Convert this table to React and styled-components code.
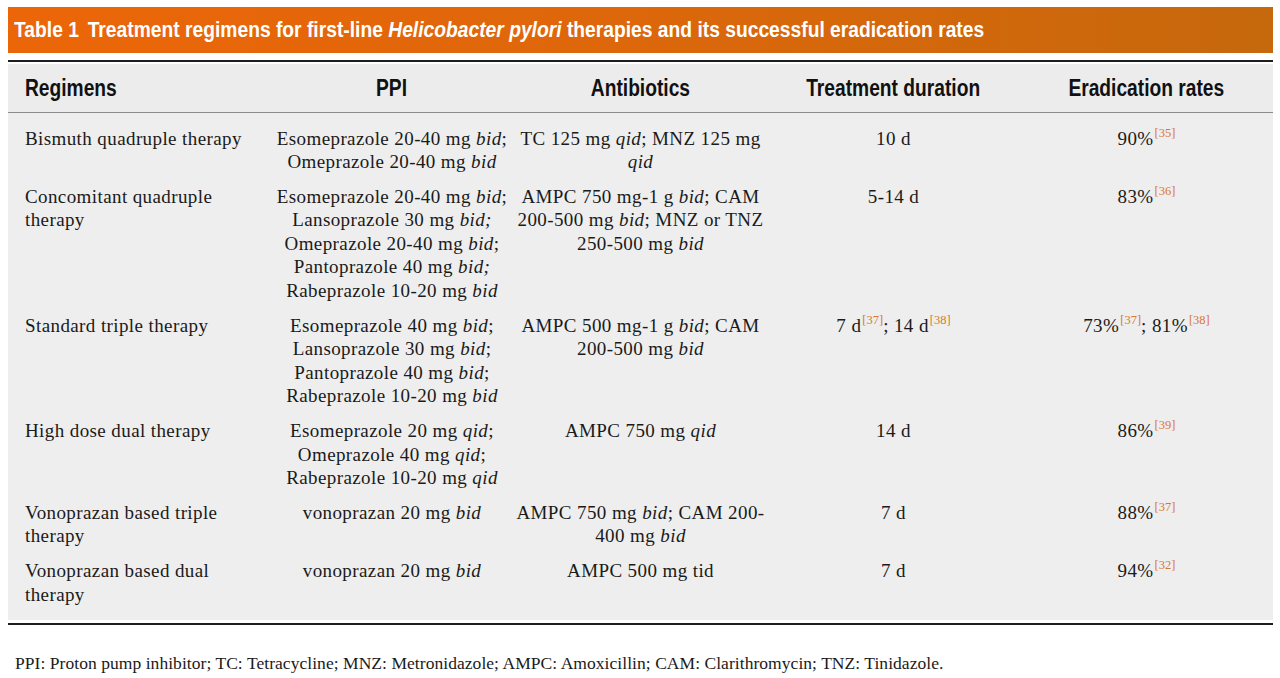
import React from "react";
import styled, { createGlobalStyle } from "styled-components";

const Global = createGlobalStyle`
  html, body { margin: 0; padding: 0; background: #ffffff; }
  body { width: 1280px; height: 678px; overflow: hidden; }
`;

const COLS = "262px 244px 253px 253px 253px";

const Page = styled.div`
  width: 1265px;
  padding: 7px 0 0 8px;
`;

const TitleBar = styled.div`
  height: 46px;
  display: flex;
  align-items: center;
  padding-left: 6px;
  background: linear-gradient(90deg, #ec6608 0%, #dd670b 50%, #c6680c 100%);
  color: #ffffff;
  font-family: "Liberation Sans Narrow", "Arial Narrow", "Liberation Sans", sans-serif;
  font-weight: 700;
  font-size: 22px;
  white-space: nowrap;
  overflow: hidden;
`;

/* Arial Narrow is not installed: narrow the Liberation Sans glyphs instead */
const Narrow = styled.span`
  display: inline-block;
  white-space: nowrap;
  transform: scaleX(${(p) => p.$k});
  transform-origin: ${(p) => p.$origin || "left"} center;
`;

const Gap = styled.span`
  display: inline-block;
  width: 10px;
`;

const Table = styled.div`
  margin-top: 7px;
  border-top: 2px solid #1e1e1e;
  padding-top: 2px;
`;

const HeaderRow = styled.div`
  display: grid;
  grid-template-columns: ${COLS};
  height: 48px;
  align-items: center;
  background: #ececec;
  border-bottom: 1px solid #8c8c8c;
  font-family: "Liberation Sans Narrow", "Arial Narrow", "Liberation Sans", sans-serif;
  font-weight: 700;
  font-size: 23px;
  color: #111111;
`;

const HeadCell = styled.div`
  text-align: ${(p) => (p.$left ? "left" : "center")};
  padding-left: ${(p) => (p.$left ? "17px" : "0")};
`;

const Body = styled.div`
  background: #eeeeee;
  padding: 8px 0;
`;

const Row = styled.div`
  display: grid;
  grid-template-columns: ${COLS};
  padding: 5.5px 0;
  font-family: "Liberation Serif", "Times New Roman", serif;
  font-size: 19px;
  line-height: 23.6px;
  color: #1a1a1a;
  letter-spacing: 0.4px;
`;

const Cell = styled.div`
  text-align: ${(p) => (p.$left ? "left" : "center")};
  padding-left: ${(p) => (p.$left ? "17px" : "0")};
  white-space: nowrap;
`;

const Line = styled.div``;

const Ref = styled.sup`
  color: #d9782d;
  font-size: 12.5px;
  letter-spacing: 0;
  line-height: 0;
  vertical-align: 8px;
  margin-left: 1px;
`;

const BottomRule = styled.div`
  margin-top: 3px;
  border-top: 2px solid #1e1e1e;
`;

const Footnote = styled.p`
  margin: 26px 0 0 7px;
  font-family: "Liberation Serif", "Times New Roman", serif;
  font-size: 17.5px;
  line-height: 24px;
  color: #1a1a1a;
  letter-spacing: 0.05px;
`;

const I = ({ children }) => <i>{children}</i>;

const rows = [
  {
    reg: ["Bismuth quadruple therapy"],
    ppi: [
      <>Esomeprazole 20-40 mg <I>bid</I>;</>,
      <>Omeprazole 20-40 mg <I>bid</I></>,
    ],
    abx: [
      <>TC 125 mg <I>qid</I>; MNZ 125 mg</>,
      <><I>qid</I></>,
    ],
    dur: [<>10 d</>],
    rate: [<>90%<Ref>[35]</Ref></>],
  },
  {
    reg: ["Concomitant quadruple", "therapy"],
    ppi: [
      <>Esomeprazole 20-40 mg <I>bid</I>;</>,
      <>Lansoprazole 30 mg <I>bid;</I></>,
      <>Omeprazole 20-40 mg <I>bid</I>;</>,
      <>Pantoprazole 40 mg <I>bid;</I></>,
      <>Rabeprazole 10-20 mg <I>bid</I></>,
    ],
    abx: [
      <>AMPC 750 mg-1 g <I>bid</I>; CAM</>,
      <>200-500 mg <I>bid</I>; MNZ or TNZ</>,
      <>250-500 mg <I>bid</I></>,
    ],
    dur: [<>5-14 d</>],
    rate: [<>83%<Ref>[36]</Ref></>],
  },
  {
    reg: ["Standard triple therapy"],
    ppi: [
      <>Esomeprazole 40 mg <I>bid</I>;</>,
      <>Lansoprazole 30 mg <I>bid</I>;</>,
      <>Pantoprazole 40 mg <I>bid</I>;</>,
      <>Rabeprazole 10-20 mg <I>bid</I></>,
    ],
    abx: [
      <>AMPC 500 mg-1 g <I>bid</I>; CAM</>,
      <>200-500 mg <I>bid</I></>,
    ],
    dur: [<>7 d<Ref>[37]</Ref>; 14 d<Ref>[38]</Ref></>],
    rate: [<>73%<Ref>[37]</Ref>; 81%<Ref>[38]</Ref></>],
  },
  {
    reg: ["High dose dual therapy"],
    ppi: [
      <>Esomeprazole 20 mg <I>qid</I>;</>,
      <>Omeprazole 40 mg <I>qid</I>;</>,
      <>Rabeprazole 10-20 mg <I>qid</I></>,
    ],
    abx: [<>AMPC 750 mg <I>qid</I></>],
    dur: [<>14 d</>],
    rate: [<>86%<Ref>[39]</Ref></>],
  },
  {
    reg: ["Vonoprazan based triple", "therapy"],
    ppi: [<>vonoprazan 20 mg <I>bid</I></>],
    abx: [
      <>AMPC 750 mg <I>bid</I>; CAM 200-</>,
      <>400 mg <I>bid</I></>,
    ],
    dur: [<>7 d</>],
    rate: [<>88%<Ref>[37]</Ref></>],
  },
  {
    reg: ["Vonoprazan based dual", "therapy"],
    ppi: [<>vonoprazan 20 mg <I>bid</I></>],
    abx: [<>AMPC 500 mg tid</>],
    dur: [<>7 d</>],
    rate: [<>94%<Ref>[32]</Ref></>],
  },
];

const heads = ["PPI", "Antibiotics", "Treatment duration", "Eradication rates"];

const Lines = ({ items }) => items.map((x, i) => <Line key={i}>{x}</Line>);

export default function App() {
  return (
    <>
      <Global />
      <Page>
        <TitleBar>
          <Narrow $k={0.875}>
            Table 1<Gap />Treatment regimens for first-line <i>Helicobacter pylori</i> therapies and its successful eradication rates
          </Narrow>
        </TitleBar>
        <Table>
          <HeaderRow>
            <HeadCell $left>
              <Narrow $k={0.835}>Regimens</Narrow>
            </HeadCell>
            {heads.map((h) => (
              <HeadCell key={h}>
                <Narrow $k={0.835} $origin="center">{h}</Narrow>
              </HeadCell>
            ))}
          </HeaderRow>
          <Body>
            {rows.map((r, i) => (
              <Row key={i}>
                <Cell $left><Lines items={r.reg} /></Cell>
                <Cell><Lines items={r.ppi} /></Cell>
                <Cell><Lines items={r.abx} /></Cell>
                <Cell><Lines items={r.dur} /></Cell>
                <Cell><Lines items={r.rate} /></Cell>
              </Row>
            ))}
          </Body>
        </Table>
        <BottomRule />
        <Footnote>
          PPI: Proton pump inhibitor; TC: Tetracycline; MNZ: Metronidazole; AMPC: Amoxicillin; CAM: Clarithromycin; TNZ: Tinidazole.
        </Footnote>
      </Page>
    </>
  );
}
